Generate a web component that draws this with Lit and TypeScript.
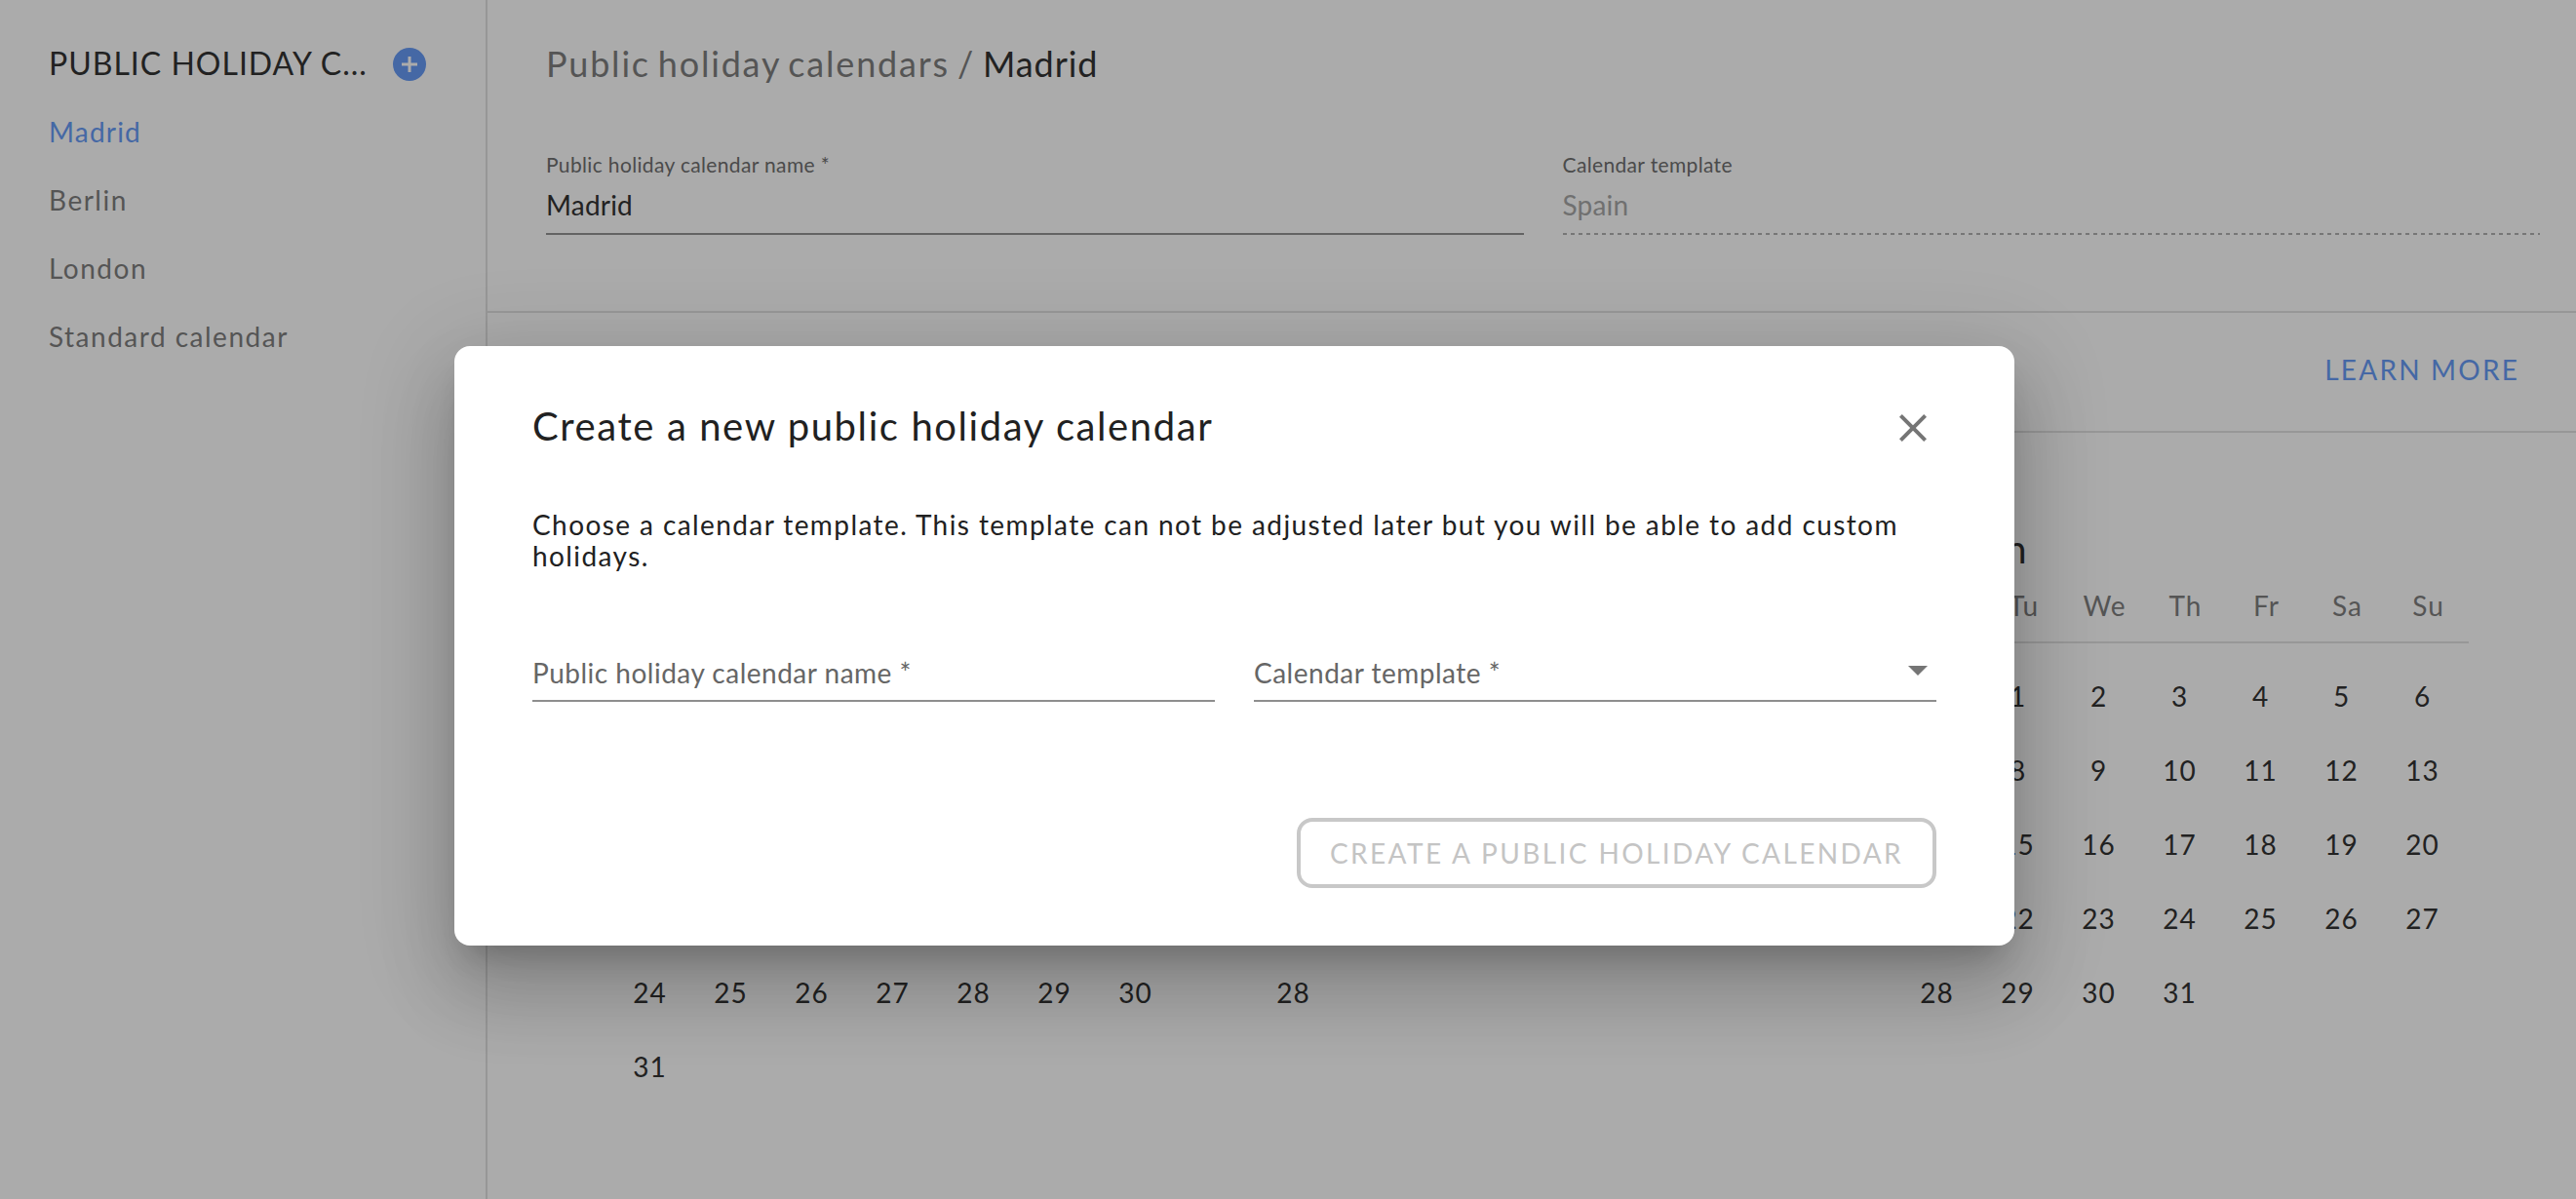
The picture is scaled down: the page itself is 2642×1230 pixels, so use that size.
import { LitElement, html, css } from "lit";
import { customElement } from "lit/decorators.js";

const WEEK = ["Mo", "Tu", "We", "Th", "Fr", "Sa", "Su"];
// Only what is not covered by the dialog is written out.
const MONTHS = [
  { name: "", offset: 5, days: 31, head: false, show: (d: number) => d >= 24 },
  { name: "", offset: 1, days: 28, head: false, show: (d: number) => d === 28 },
  { name: "March", offset: 1, days: 31, head: true, show: (d: number) => d % 7 !== 0 || d === 28 },
];

@customElement("app-root")
export class AppRoot extends LitElement {
  static styles = css`
    :host { display: block; position: relative; width: 2642px; height: 1230px; overflow: hidden; background: #fff; font-family: "Lato", "Noto Sans", sans-serif; color: #333; }
    * { box-sizing: border-box; }
    .page { display: flex; height: 1230px; }
    .side { width: 500px; flex: none; border-right: 2px solid #e2e2e2; padding: 43px 0 0 50px; }
    .side-head { display: flex; align-items: center; height: 44px; margin-bottom: 28px; }
    .side-title { width: 334px; font-size: 32px; line-height: 44px; letter-spacing: 1px; white-space: nowrap; }
    .plus { width: 34px; height: 34px; margin: 1px 0 0 19px; flex: none; display: block; }
    .nav { display: flex; flex-direction: column; gap: 30px; font-size: 28px; line-height: 40px; letter-spacing: 1.5px; color: #7f7f7f; }
    .nav .on { color: #679bf6; letter-spacing: 1.2px; }
    .main { flex: 1; min-width: 0; }
    .top { height: 321px; border-bottom: 2px solid #e2e2e2; padding: 43px 37px 0 60px; }
    .crumb { font-size: 36px; line-height: 44px; letter-spacing: 1.8px; word-spacing: -3px; color: #7f7f7f; }
    .crumb b { font-weight: 400; color: #333; letter-spacing: .9px; }
    .fields { display: flex; gap: 40px; margin-top: 68px; }
    .field { flex: 1; }
    .lab { font-size: 21px; line-height: 28px; letter-spacing: .35px; color: #707070; }
    .val { font-size: 28px; line-height: 40px; letter-spacing: .2px; margin-top: 7px; padding-bottom: 9px; border-bottom: 2px solid #949494; }
    .val.off { color: #a8a8a8; border-bottom: 0; padding-bottom: 11px; background: repeating-linear-gradient(90deg, #b0b0b0 0 4px, transparent 4px 8px) bottom / 100% 2px no-repeat; }
    .bar { height: 123px; border-bottom: 2px solid #e2e2e2; display: flex; justify-content: flex-end; align-items: center; padding: 0 58px 6px 0; }
    .learn { font-size: 28px; letter-spacing: 2.2px; color: #679bf6; }
    .cal { display: flex; gap: 74px; padding: 97px 0 0 126px; }
    .month { width: 586px; }
    .mname { font-size: 40px; line-height: 44px; height: 44px; padding-left: 17px; letter-spacing: 1px; }
    .wk { display: grid; grid-template-columns: repeat(7, 83px); margin: 11px 0 0 5px; height: 64px; font-size: 28px; line-height: 50px; text-align: center; letter-spacing: 1px; color: #7f7f7f; }
    .wk.ruled { border-bottom: 2px solid #e2e2e2; }
    .days { display: grid; grid-template-columns: repeat(7, 83px); grid-auto-rows: 76px; margin: 16px 0 0 -1px; font-size: 28px; line-height: 76px; text-align: center; letter-spacing: 1px; }
    .scrim { position: absolute; inset: 0; background: rgba(0,0,0,.33); padding: 355px 0 0 466px; }
    .modal { width: 1600px; height: 615px; background: #fff; border-radius: 16px; padding: 58px 80px 0; color: #212121;
      box-shadow: 0 22px 30px -14px rgba(0,0,0,.2), 0 48px 76px 6px rgba(0,0,0,.14), 0 18px 92px 16px rgba(0,0,0,.12); }
    .m-head { display: flex; justify-content: space-between; align-items: center; height: 48px; }
    .m-title { font-size: 40px; line-height: 48px; letter-spacing: 1.6px; }
    .close { width: 48px; height: 48px; display: block; fill: #757575; margin-top: 3px; }
    .m-text { font-size: 28px; line-height: 32px; letter-spacing: 1.41px; margin: 61px 0 0; }
    .m-fields { display: flex; gap: 40px; margin-top: 72px; }
    .m-field { flex: 1; position: relative; height: 62px; border-bottom: 2px solid #8e8e8e; font-size: 28px; line-height: 40px; letter-spacing: .5px; color: #666; padding-top: 12px; }
    .drop { position: absolute; right: -5px; top: 5px; width: 48px; height: 48px; fill: #757575; display: block; }
    .m-foot { display: flex; justify-content: flex-end; margin-top: 119px; }
    .btn { width: 656px; height: 72px; border: 4px solid #c8c8c8; border-radius: 16px; background: #fff; color: #c4c4c4; font: inherit; font-size: 28px; letter-spacing: 2.4px; padding: 0; }
  `;

  private month(m: (typeof MONTHS)[number]) {
    const blanks = Array.from({ length: m.offset });
    const days = Array.from({ length: m.days }, (_, i) => i + 1);
    return html`<div class="month">
      <div class="mname">${m.name}</div>
      <div class="wk ${m.head ? "ruled" : ""}">${m.head ? WEEK.map((d, i) => html`<span>${i ? d : ""}</span>`) : ""}</div>
      <div class="days">${blanks.map(() => html`<span></span>`)}${days.map((d) => html`<span>${m.show(d) ? d : ""}</span>`)}</div>
    </div>`;
  }

  render() {
    return html`
      <div class="page">
        <aside class="side">
          <div class="side-head">
            <div class="side-title">PUBLIC HOLIDAY C...</div>
            <svg class="plus" viewBox="0 0 34 34">
              <circle cx="17" cy="17" r="17" fill="#679bf6"></circle>
              <path d="M15.5 9h3v6.5H25v3h-6.5V25h-3v-6.5H9v-3h6.5z" fill="#fff"></path>
            </svg>
          </div>
          <nav class="nav">
            <span class="on">Madrid</span>
            <span>Berlin</span>
            <span>London</span>
            <span>Standard calendar</span>
          </nav>
        </aside>
        <main class="main">
          <section class="top">
            <div class="crumb">Public holiday calendars / <b>Madrid</b></div>
            <div class="fields">
              <div class="field"><div class="lab">Public holiday calendar name *</div><div class="val">Madrid</div></div>
              <div class="field"><div class="lab">Calendar template</div><div class="val off">Spain</div></div>
            </div>
          </section>
          <section class="bar"><span class="learn">LEARN MORE</span></section>
          <section class="cal">${MONTHS.map((m) => this.month(m))}</section>
        </main>
      </div>
      <div class="scrim">
        <div class="modal">
          <div class="m-head">
            <div class="m-title">Create a new public holiday calendar</div>
            <svg class="close" viewBox="0 0 24 24"><path d="M19 6.41 17.59 5 12 10.59 6.41 5 5 6.41 10.59 12 5 17.59 6.41 19 12 13.41 17.59 19 19 17.59 13.41 12z"></path></svg>
          </div>
          <p class="m-text">Choose a calendar template. This template can not be adjusted later but you will be able to add custom holidays.</p>
          <div class="m-fields">
            <div class="m-field">Public holiday calendar name *</div>
            <div class="m-field">Calendar template *
              <svg class="drop" viewBox="0 0 24 24"><path d="M7 10l5 5 5-5z"></path></svg>
            </div>
          </div>
          <div class="m-foot"><button class="btn">CREATE A PUBLIC HOLIDAY CALENDAR</button></div>
        </div>
      </div>
    `;
  }
}
